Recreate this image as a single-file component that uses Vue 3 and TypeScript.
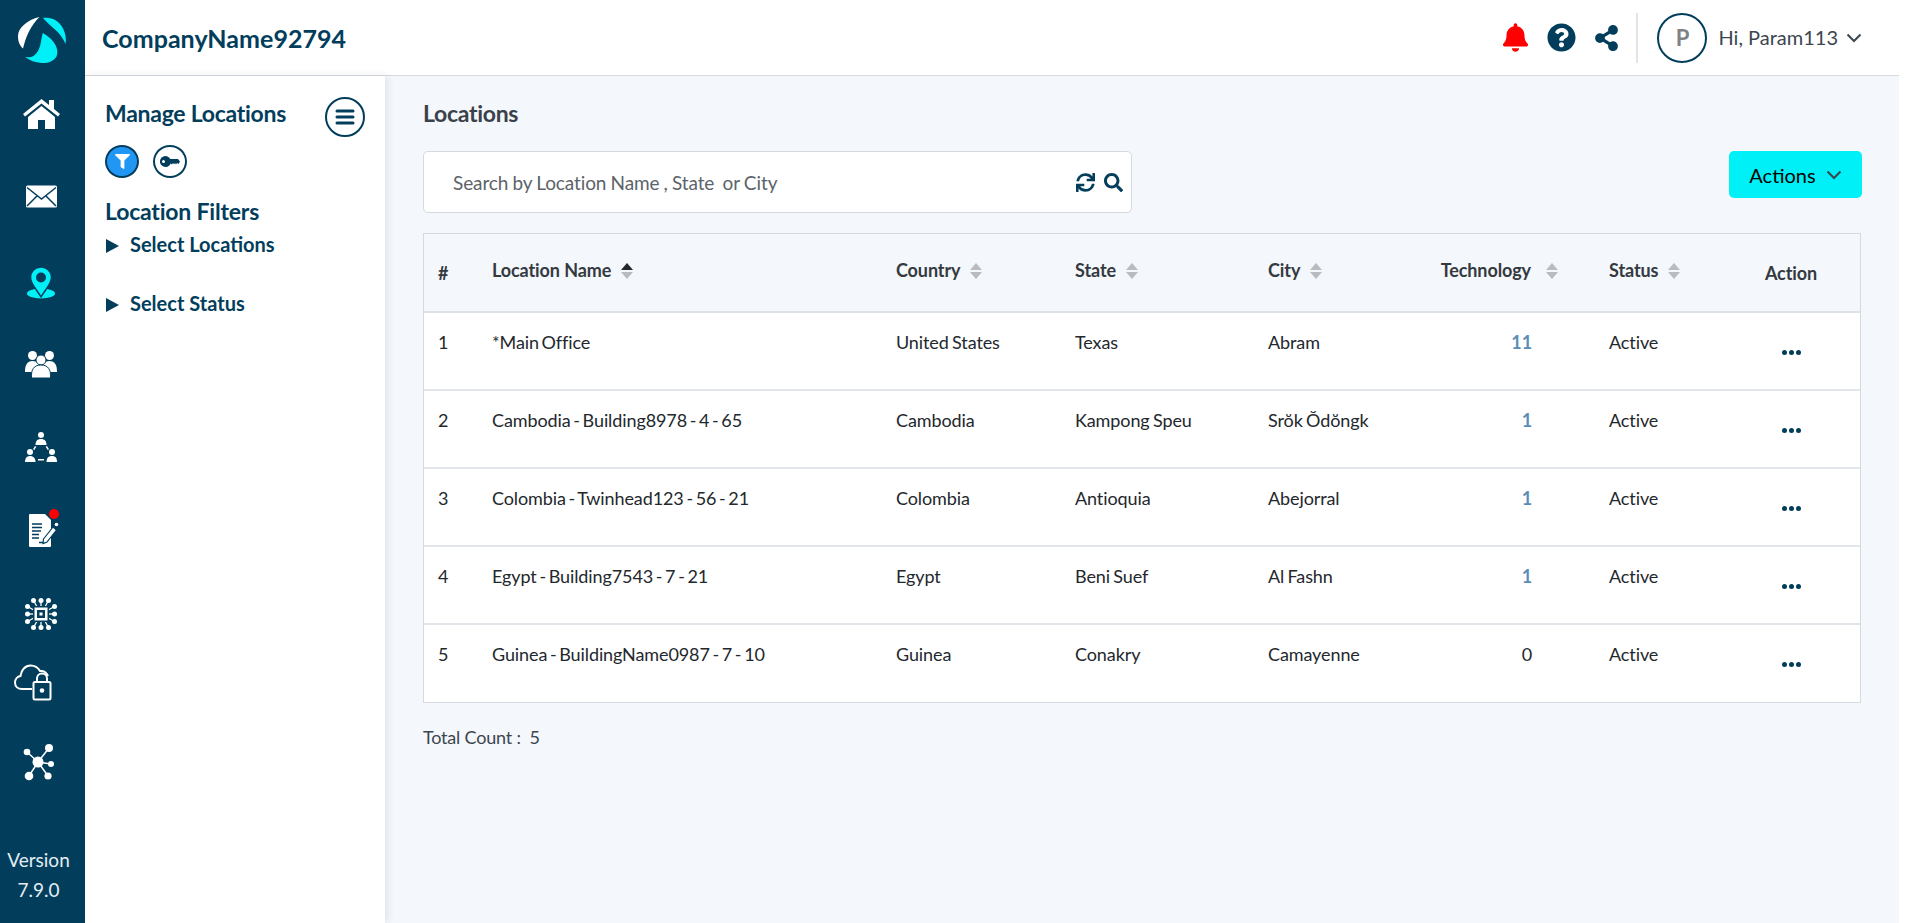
<template>
  <div class="app">
    <aside class="rail">
      <div class="logo">
        <svg width="85" height="72" viewBox="0 0 85 72">
          <path fill="#fff" d="M39.500 17C27 20 18 28 18 36c0 6 2 10 5 12.500 1.500-6 3-11 6-17 3-6 6.500-10.500 10.500-14.500z" />
          <path fill="#00f0f8" d="M43 18c8-1.500 16 2.500 20 10.500 2.500 5 3.500 10 2.500 15.500-2.500-6-6-10.500-10.500-14.500-4-3.500-8.500-7.500-12-11.500z" />
          <path fill="#00f0f8" d="M43 33c5 3 10 7 12.500 12 2 4 2.500 8 1 11.500-3 5-9 7-15 6.500-6-.5-12-2.500-16.500-6 3 .5 6 .5 8.500-1 4-3 6.500-8 7.500-14 .5-3.500 1-7 2-9z" />
        </svg>
      </div>
      <nav class="nav">
        <a class="nav-item">
          <svg width="37" height="30" viewBox="0 0 37 30" fill="#fff">
            <path d="M18.500 0 0 15l2 2.500L18.500 4.500 35 17.500l2-2.500-6-5V1h-5v5z" />
            <path d="M18.500 7 5 18v12h10v-9h7v9h10V18z" />
          </svg>
        </a>
        <a class="nav-item">
          <svg width="31" height="23" viewBox="0 0 31 23">
            <rect width="31" height="22" y=".5" rx="1.500" fill="#fff" />
            <path d="M1 2.500 15.500 14 30 2.500M1 21l10.500-10.500M30 21 19.500 10.500" fill="none" stroke="#023e5c" stroke-width="1.500" />
          </svg>
        </a>
        <a class="nav-item pin">
          <svg width="28" height="32" viewBox="0 0 28 32">
            <ellipse cx="14" cy="26.500" rx="14" ry="5" fill="#00f0f8" />
            <path d="M14 0C8 0 3.500 4.600 3.500 10.500 3.500 17 10 23 14 30c4-7 10.500-13 10.500-19.500C24.500 4.600 20 0 14 0z" fill="#00f0f8" stroke="#023e5c" stroke-width="1.500" />
            <circle cx="14" cy="10.500" r="5" fill="#023e5c" />
          </svg>
        </a>
        <a class="nav-item">
          <svg width="32" height="27" viewBox="0 0 32 27" fill="#fff">
            <circle cx="7.500" cy="4.500" r="4.500" />
            <circle cx="24.500" cy="4.500" r="4.500" />
            <path d="M0 21c0-7 2-11 7.500-11S15 14 15 21z" />
            <path d="M17 21c0-7 2-11 7.500-11S32 14 32 21z" />
            <circle cx="16" cy="9" r="5" stroke="#023e5c" />
            <path d="M6.500 27c-.5-8 2-13 9.500-13s10 5 9.500 13z" stroke="#023e5c" />
          </svg>
        </a>
        <a class="nav-item">
          <svg width="32" height="31" viewBox="0 0 32 31" fill="#fff">
            <circle cx="16" cy="3" r="3" />
            <path d="M10.500 13c0-4 2-6 5.500-6s5.500 2 5.500 6z" />
            <circle cx="5" cy="20" r="3" />
            <path d="M0 30c0-4 2-6 5-6s5.500 2 5.500 6z" />
            <circle cx="27" cy="20" r="3" />
            <path d="M21.500 30c0-4 2-6 5.500-6s5 2 5 6z" />
            <path d="M13 27h6v1.500h-6zM10 14l1.300.8-2 3.200-1.300-.8zM22 14l-1.300.8 2 3.200 1.300-.8z" />
          </svg>
        </a>
        <a class="nav-item doc">
          <svg width="31" height="33" viewBox="0 0 31 33">
            <path d="M2 0h15l6 6v26a1 1 0 0 1-1 1H2a1 1 0 0 1-1-1V1a1 1 0 0 1 1-1z" fill="#fff" />
            <path d="M4 10h10M4 13.500h10M4 17h9M4 20.500h7M4 24h7M11 28.500h6" stroke="#023e5c" stroke-width="1.400" />
            <path d="M15.500 25 25 13l3.500 3-9.500 12-4 1.500z" fill="#fff" stroke="#023e5c" stroke-width="1.200" />
            <circle cx="28.500" cy="10.500" r="1.800" fill="#fff" />
          </svg>
          <span class="dot"></span>
        </a>
        <a class="nav-item">
          <svg width="32" height="32" viewBox="0 0 32 32">
            <g fill="none" stroke="#fff" stroke-width="1.300">
              <line v-for="n in chipNodes" :key="n.id" x1="16" y1="16" :x2="n.x" :y2="n.y" />
            </g>
            <circle v-for="n in chipNodes" :key="n.id" :cx="n.x" :cy="n.y" r="2.500" fill="#fff" />
            <rect x="8" y="8" width="16" height="16" fill="#023e5c" />
            <rect x="9.500" y="9.500" width="13" height="13" fill="#fff" />
            <rect x="12" y="12" width="8" height="8" fill="#023e5c" />
            <rect x="14.500" y="14.500" width="3" height="3" fill="#fff" />
          </svg>
        </a>
        <a class="nav-item cloud">
          <svg width="38" height="37" viewBox="0 0 38 37">
            <path d="M18 25H8c-4 0-7-2.500-7-6.500 0-3.500 2.500-6 5.500-6.500C7 6 11.500 1.500 16.500 1.500c4.500 0 7.500 2 9.500 5.500 3.500-.5 6.500 1.500 8 5" fill="none" stroke="#fff" stroke-width="2" />
            <path d="M23 18v-3.500a5 5 0 0 1 10 0V18" fill="none" stroke="#fff" stroke-width="2" />
            <rect x="19.500" y="18" width="17" height="17.500" rx="1.500" fill="#023e5c" stroke="#fff" stroke-width="2" />
            <circle cx="28" cy="26.500" r="2.300" fill="#fff" />
          </svg>
        </a>
        <a class="nav-item hub">
          <svg width="32" height="37" viewBox="0 0 32 37" fill="#fff" stroke="#fff">
            <path d="M15 18 4 8M15 18 26 4M15 18l13 2M15 18 6 32M15 18l10 14" stroke-width="1.500" />
            <g stroke="none">
              <circle cx="15" cy="18" r="5.500" />
              <circle cx="4" cy="8" r="3.300" />
              <circle cx="26" cy="4" r="4" />
              <circle cx="28" cy="20" r="3" />
              <circle cx="6" cy="32" r="4.300" />
              <circle cx="25" cy="32" r="3.600" />
            </g>
          </svg>
        </a>
      </nav>
      <div class="version">
        <div>Version</div>
        <div>7.9.0</div>
      </div>
    </aside>

    <div class="body">
      <header class="topbar">
        <div class="company">CompanyName92794</div>
        <div class="top-icons">
          <svg width="25" height="29" viewBox="0 0 448 512"><path fill="#ff0000" d="M224 512c35.320 0 63.970-28.650 63.970-64H160.030c0 35.350 28.650 64 63.970 64zm215.390-149.710c-19.320-20.760-55.470-51.990-55.470-154.290 0-77.700-54.480-139.900-127.940-155.160V32c0-17.670-14.320-32-31.980-32s-31.980 14.330-31.980 32v20.840C118.560 68.100 64.080 130.300 64.080 208c0 102.300-36.150 133.530-55.470 154.290-6 6.450-8.660 14.160-8.610 21.710.110 16.400 12.980 32 32.100 32h383.800c19.120 0 32-15.600 32.100-32 .050-7.550-2.610-15.270-8.610-21.710z" /></svg>
          <svg width="29" height="29" viewBox="0 0 512 512"><path fill="#023e5c" d="M504 256c0 136.997-111.043 248-248 248S8 392.997 8 256C8 119.083 119.043 8 256 8s248 111.083 248 248zM262.655 90c-54.497 0-89.255 22.957-116.549 63.758-3.536 5.286-2.353 12.415 2.715 16.258l34.699 26.310c5.205 3.947 12.621 3.008 16.665-2.122 17.864-22.658 30.113-35.797 57.303-35.797 20.429 0 45.698 13.148 45.698 32.958 0 14.976-12.363 22.667-32.534 33.976C247.128 238.528 216 254.941 216 296v4c0 6.627 5.373 12 12 12h56c6.627 0 12-5.373 12-12v-1.333c0-28.462 83.186-29.647 83.186-106.667 0-58.002-60.165-102-116.531-102zM256 338c-25.365 0-46 20.635-46 46 0 25.364 20.635 46 46 46s46-20.636 46-46c0-25.365-20.635-46-46-46z" /></svg>
          <svg width="23" height="26" viewBox="0 0 448 512"><path fill="#023e5c" d="M352 320c-22.608 0-43.387 7.819-59.790 20.895l-102.486-64.054a96.551 96.551 0 0 0 0-41.683l102.486-64.054C308.613 184.181 329.392 192 352 192c53.019 0 96-42.981 96-96S405.019 0 352 0s-96 42.981-96 96c0 7.158.790 14.130 2.276 20.841L155.790 180.895C139.387 167.819 118.608 160 96 160c-53.019 0-96 42.981-96 96s42.981 96 96 96c22.608 0 43.387-7.819 59.790-20.895l102.486 64.054A96.301 96.301 0 0 0 256 416c0 53.019 42.981 96 96 96s96-42.981 96-96-42.981-96-96-96z" /></svg>
        </div>
        <div class="user">
          <div class="avatar">P</div>
          <span class="hi">Hi, Param113</span>
          <svg class="chev" width="16" height="10" viewBox="0 0 16 10"><path d="M1.500 1.500 8 8l6.500-6.500" fill="none" stroke="#3c4650" stroke-width="2" /></svg>
        </div>
      </header>

      <div class="content">
        <section class="panel">
          <div class="panel-head">
            <h2>Manage Locations</h2>
            <button class="menu-btn">
              <svg width="20" height="16" viewBox="0 0 20 16"><path d="M2 2h16M2 8h16M2 14h16" stroke="#023e5c" stroke-width="3" stroke-linecap="round" /></svg>
            </button>
          </div>
          <div class="panel-tabs">
            <span class="tab active">
              <svg width="15" height="15" viewBox="0 0 512 512"><path fill="#fff" d="M487.976 0H24.028C2.710 0-8.047 25.866 7.058 40.971L192 225.941V432c0 7.831 3.821 15.170 10.237 19.662l80 55.980C298.020 518.690 320 507.493 320 487.980V225.941l184.947-184.970C520.021 25.896 509.338 0 487.976 0z" /></svg>
            </span>
            <span class="tab">
              <svg width="20" height="11" viewBox="0 0 20 11"><path fill="#023e5c" d="M5.500 0a5.500 5.500 0 1 1-.1 11 5.500 5.500 0 0 1 .1-11zM3.500 4a1.500 1.500 0 1 0 0 3 1.500 1.500 0 0 0 0-3zM9 3h9l2 2.500L18.500 8l-1.500-1-1 1.500-1-1.500-1 1.500-1-1.500-1 1.500L10 7z" /></svg>
            </span>
          </div>
          <h3>Location Filters</h3>
          <div class="filter">
            <span class="arrow"></span>
            <span>Select Locations</span>
          </div>
          <div class="filter second">
            <span class="arrow"></span>
            <span>Select Status</span>
          </div>
        </section>

        <main class="main">
          <h1>Locations</h1>
          <div class="toolbar">
            <div class="search">
              <span class="placeholder">Search by Location Name , State &nbsp;or City</span>
              <svg width="19" height="19" viewBox="0 0 512 512"><path fill="#023e5c" d="M440.650 12.570l4 82.770A247.160 247.160 0 0 0 255.830 8C134.730 8 33.910 94.920 12.290 209.820A12 12 0 0 0 24.090 224h49.050a12 12 0 0 0 11.670-9.260 175.910 175.910 0 0 1 317-56.940l-101.460-4.860a12 12 0 0 0-12.570 12v47.410a12 12 0 0 0 12 12H500a12 12 0 0 0 12-12V12a12 12 0 0 0-12-12h-47.370a12 12 0 0 0-11.980 12.570zM255.830 432a175.610 175.610 0 0 1-146-77.800l101.800 4.870a12 12 0 0 0 12.570-12v-47.400a12 12 0 0 0-12-12H12a12 12 0 0 0-12 12V500a12 12 0 0 0 12 12h47.350a12 12 0 0 0 12-12.600l-4.150-82.570A247.170 247.170 0 0 0 255.830 504c121.110 0 221.930-86.920 243.550-201.820a12 12 0 0 0-11.800-14.180h-49.050a12 12 0 0 0-11.670 9.260A175.860 175.860 0 0 1 255.830 432z" /></svg>
              <svg width="19" height="19" viewBox="0 0 512 512"><path fill="#023e5c" d="M505 442.700L405.300 343c-4.500-4.500-10.600-7-17-7H372c27.600-35.300 44-79.700 44-128C416 93.100 322.900 0 208 0S0 93.100 0 208s93.100 208 208 208c48.300 0 92.700-16.400 128-44v16.300c0 6.400 2.500 12.500 7 17l99.700 99.700c9.400 9.400 24.600 9.400 33.900 0l28.300-28.300c9.400-9.400 9.400-24.600.1-34zM208 336c-70.700 0-128-57.200-128-128 0-70.700 57.200-128 128-128 70.700 0 128 57.200 128 128 0 70.700-57.200 128-128 128z" /></svg>
            </div>
            <button class="actions">
              Actions
              <svg width="16" height="10" viewBox="0 0 16 10"><path d="M1.500 1.500 8 8l6.500-6.500" fill="none" stroke="#3c4650" stroke-width="2" /></svg>
            </button>
          </div>

          <div class="table-wrap">
            <table>
              <colgroup>
                <col v-for="w in colWidths" :key="w.key" :style="{ width: w.px + 'px' }" />
              </colgroup>
              <thead>
                <tr>
                  <th class="plain">#</th>
                  <th v-for="c in sortable" :key="c.label" :class="{ tech: c.label === 'Technology' }">
                    <span class="th-in">
                      {{ c.label }}
                      <span class="sort">
                        <i class="up" :class="{ on: c.active }"></i>
                        <i class="down"></i>
                      </span>
                    </span>
                  </th>
                  <th class="plain center">Action</th>
                </tr>
              </thead>
              <tbody>
                <tr v-for="(r, i) in rows" :key="r.name">
                  <td>{{ i + 1 }}</td>
                  <td class="name">{{ r.name }}</td>
                  <td>{{ r.country }}</td>
                  <td>{{ r.state }}</td>
                  <td>{{ r.city }}</td>
                  <td class="tech" :class="{ link: r.tech > 0 }">{{ r.tech }}</td>
                  <td>Active</td>
                  <td class="center">
                    <span class="dots"><i></i><i></i><i></i></span>
                  </td>
                </tr>
              </tbody>
            </table>
          </div>
          <div class="total">Total Count :&nbsp; 5</div>
        </main>
      </div>
    </div>
  </div>
</template>

<script setup lang="ts">
interface LocationRow {
  name: string
  country: string
  state: string
  city: string
  tech: number
}

const rows: LocationRow[] = [
  { name: '*Main Office', country: 'United States', state: 'Texas', city: 'Abram', tech: 11 },
  { name: 'Cambodia - Building8978 - 4 - 65', country: 'Cambodia', state: 'Kampong Speu', city: 'Srŏk Ŏdŏngk', tech: 1 },
  { name: 'Colombia - Twinhead123 - 56 - 21', country: 'Colombia', state: 'Antioquia', city: 'Abejorral', tech: 1 },
  { name: 'Egypt - Building7543 - 7 - 21', country: 'Egypt', state: 'Beni Suef', city: 'Al Fashn', tech: 1 },
  { name: 'Guinea - BuildingName0987 - 7 - 10', country: 'Guinea', state: 'Conakry', city: 'Camayenne', tech: 0 }
]

const sortable = [
  { label: 'Location Name', active: true },
  { label: 'Country', active: false },
  { label: 'State', active: false },
  { label: 'City', active: false },
  { label: 'Technology', active: false },
  { label: 'Status', active: false }
]

const colWidths = [54, 404, 179, 193, 147, 194, 127, 138].map((px, key) => ({ px, key }))

// little circles round the chip icon, three on each side
const chipNodes = [-7.5, 0, 7.5].flatMap((o, i) => [
  { id: i * 4, x: 16 + o, y: 2.5 },
  { id: i * 4 + 1, x: 16 + o, y: 29.5 },
  { id: i * 4 + 2, x: 2.5, y: 16 + o },
  { id: i * 4 + 3, x: 29.5, y: 16 + o }
])
</script>

<style scoped>
.app {
  display: flex;
  width: 1899px;
  height: 923px;
  font-family: Lato, "Open Sans", sans-serif;
  color: #23282d;
  overflow: hidden;
}

.rail {
  width: 85px;
  flex: none;
  background: #023e5c;
  display: flex;
  flex-direction: column;
}

.logo {
  height: 72px;
}

.nav {
  display: flex;
  flex-direction: column;
  align-items: center;
  padding-right: 3px;
}

.nav-item {
  height: 83px;
  box-sizing: border-box;
  display: flex;
  align-items: center;
  justify-content: center;
  position: relative;
}

.pin {
  padding-top: 5px;
  height: 85px;
}

.doc {
  margin-left: 5px;
}

.doc .dot {
  position: absolute;
  left: 21px;
  top: 20px;
  width: 10px;
  height: 10px;
  border-radius: 50%;
  background: #ff0000;
}

.cloud {
  height: 60px;
  margin-right: 16px;
  margin-top: -3px;
}

.hub {
  height: 100px;
  margin-right: 5px;
}

.version {
  margin-top: auto;
  padding: 0 8px 18px 0;
  text-align: center;
  font-size: 19px;
  line-height: 30px;
  color: #e4edf2;
}

.body {
  flex: 1;
  min-width: 0;
  display: flex;
  flex-direction: column;
}

.topbar {
  height: 76px;
  flex: none;
  box-sizing: border-box;
  border-bottom: 1px solid #d6d9dd;
  background: #fff;
  display: flex;
  align-items: center;
  padding: 0 37px 0 18px;
}

.company {
  margin-left: -1px;
  font-size: 25px;
  font-weight: 700;
  letter-spacing: 0.03px;
  color: #023e5c;
  margin-right: auto;
}

.top-icons {
  display: flex;
  align-items: center;
  gap: 19px;
  height: 50px;
  padding-right: 18px;
  border-right: 2px solid #e2e4e7;
}

.user {
  display: flex;
  align-items: center;
  margin-left: 19px;
}

.avatar {
  width: 50px;
  height: 50px;
  box-sizing: border-box;
  border: 2px solid #023e5c;
  border-radius: 50%;
  display: flex;
  align-items: center;
  justify-content: center;
  font-size: 22px;
  font-weight: 700;
  color: #808285;
}

.hi {
  margin: 0 0 2px 11px;
  font-size: 20px;
  color: #3c4650;
}

.chev {
  margin-left: 8px;
}

.content {
  flex: 1;
  display: flex;
  min-height: 0;
}

.panel {
  width: 300px;
  flex: none;
  box-sizing: border-box;
  background: #fff;
  padding: 21px 20px 0 20px;
  box-shadow: 2px 0 8px rgba(40, 60, 90, 0.1);
  color: #023e5c;
  z-index: 1;
}

.panel-head {
  display: flex;
  align-items: flex-start;
  justify-content: space-between;
}

.panel-head h2 {
  margin: 2px 0 0;
  font-size: 23px;
  line-height: 28px;
  font-weight: 700;
  letter-spacing: -0.27px;
}

.menu-btn {
  width: 40px;
  height: 40px;
  margin: 0;
  padding: 0;
  border: 2px solid #023e5c;
  border-radius: 50%;
  background: #fff;
  display: flex;
  align-items: center;
  justify-content: center;
}

.panel-tabs {
  display: flex;
  gap: 14px;
  margin-top: 8px;
}

.tab {
  width: 34px;
  height: 33px;
  box-sizing: border-box;
  border: 2px solid #023e5c;
  border-radius: 50%;
  display: flex;
  align-items: center;
  justify-content: center;
}

.tab.active {
  background: #2196f3;
}

.panel h3 {
  margin: 19px 0 0;
  font-size: 23px;
  line-height: 28px;
  font-weight: 700;
  letter-spacing: -0.2px;
}

.filter {
  display: flex;
  align-items: center;
  gap: 11px;
  margin-top: 6px;
  padding-left: 1px;
  font-size: 20px;
  line-height: 26px;
  font-weight: 700;
}

.filter.second {
  margin-top: 33px;
}

.arrow {
  width: 0;
  height: 0;
  margin-top: 3px;
  border-left: 13px solid #023e5c;
  border-top: 7.500px solid transparent;
  border-bottom: 7.500px solid transparent;
}

.main {
  flex: 1;
  min-width: 0;
  background: #f4f7fb;
  padding: 24px 38px 0;
}

.main h1 {
  margin: 0;
  font-size: 23px;
  line-height: 26px;
  font-weight: 700;
  letter-spacing: -0.3px;
  color: #3a4149;
}

.toolbar {
  display: flex;
  align-items: flex-start;
  justify-content: space-between;
  margin-top: 25px;
}

.search {
  width: 709px;
  height: 62px;
  box-sizing: border-box;
  background: #fff;
  border: 1px solid #d5dae1;
  border-radius: 5px;
  display: flex;
  align-items: center;
  gap: 9px;
  padding: 0 8px 0 29px;
}

.search svg {
  flex: none;
}

.placeholder {
  flex: 1;
  font-size: 19px;
  letter-spacing: -0.1px;
  word-spacing: -0.6px;
  color: #5c636a;
}

.actions {
  width: 133px;
  height: 47px;
  margin-right: -1px;
  border: 0;
  border-radius: 5px;
  background: #00f0f8;
  font-family: inherit;
  font-size: 20px;
  color: #000;
  display: flex;
  align-items: center;
  justify-content: center;
  gap: 10px;
  padding: 0;
}

.table-wrap {
  margin-top: 20px;
  border: 1px solid #d5dae1;
}

table {
  width: 100%;
  table-layout: fixed;
  border-collapse: collapse;
  font-size: 18px;
}

th {
  height: 78px;
  box-sizing: border-box;
  padding: 0 0 0 14px;
  text-align: left;
  font-weight: 700;
  letter-spacing: -0.1px;
  color: #343a40;
  border-bottom: 2px solid #dde2e8;
}

th .th-in {
  display: inline-flex;
  align-items: center;
  gap: 10px;
  position: relative;
  top: -3px;
}

th.tech {
  text-align: right;
  padding-right: 37px;
}

th.tech .th-in {
  gap: 15px;
}

th.center,
td.center {
  text-align: center;
  padding: 0;
}

.sort {
  display: inline-flex;
  flex-direction: column;
  gap: 2px;
  margin-top: 3px;
}

.sort i {
  width: 0;
  height: 0;
  border-left: 6px solid transparent;
  border-right: 6px solid transparent;
}

.sort .up {
  border-bottom: 7px solid #b8bcc0;
}

.sort .up.on {
  border-bottom-color: #23282d;
}

.sort .down {
  border-top: 7px solid #b8bcc0;
}

tbody tr {
  background: #fff;
}

td {
  height: 78px;
  box-sizing: border-box;
  padding: 18px 0 0 14px;
  vertical-align: top;
  line-height: 22px;
  letter-spacing: -0.1px;
  word-spacing: -1.2px;
  border-bottom: 2px solid #e2e6eb;
}

td.name {
  word-spacing: -1.8px;
}

tbody tr:last-child td {
  border-bottom: 0;
}

td.tech {
  text-align: right;
  padding-right: 63px;
}

td.link {
  color: #5b8db5;
  font-weight: 700;
}

td.center {
  vertical-align: middle;
}

.dots {
  display: flex;
  justify-content: center;
  gap: 2px;
  margin-top: 2px;
}

.dots i {
  width: 5px;
  height: 5px;
  border-radius: 50%;
  background: #023e5c;
}

.total {
  margin-top: 23px;
  font-size: 18px;
  line-height: 22px;
  letter-spacing: -0.2px;
  color: #3c4650;
}
</style>

<style>
html,
body {
  background: #fff;
}
</style>
